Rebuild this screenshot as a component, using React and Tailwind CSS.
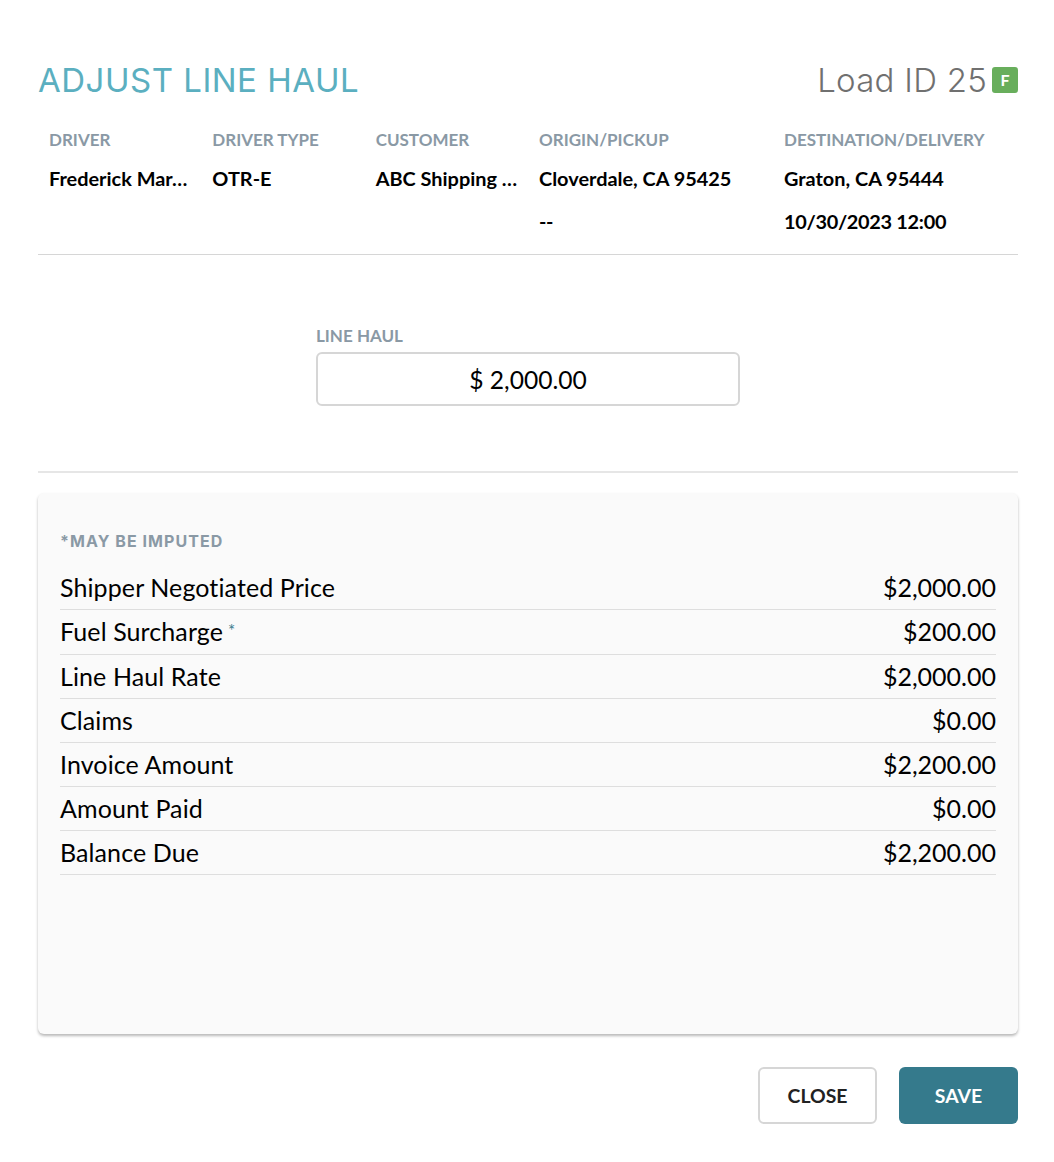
const info = [
  { label: "DRIVER", span: "col-span-2", lines: ["Frederick Mar…"] },
  { label: "DRIVER TYPE", span: "col-span-2", lines: ["OTR-E"] },
  { label: "CUSTOMER", span: "col-span-2", lines: ["ABC Shipping …"] },
  { label: "ORIGIN/PICKUP", span: "col-span-3", lines: ["Cloverdale, CA 95425", "--"] },
  { label: "DESTINATION/DELIVERY", span: "col-span-3", lines: ["Graton, CA 95444", "10/30/2023 12:00"] },
];

const rows = [
  ["Shipper Negotiated Price", "$2,000.00"],
  ["Fuel Surcharge", "$200.00", true],
  ["Line Haul Rate", "$2,000.00"],
  ["Claims", "$0.00"],
  ["Invoice Amount", "$2,200.00"],
  ["Amount Paid", "$0.00"],
  ["Balance Due", "$2,200.00"],
];

export default function App() {
  return (
    <div className="w-[1054px] h-[1162px] bg-white pl-[38px] pr-[36px] pt-[60px] font-['Lato','Liberation_Sans',sans-serif] text-black overflow-hidden [font-variant-ligatures:none]">
      <div className="flex items-center justify-between h-[40px]">
        <h1 className="font-['Inter',sans-serif] text-[33px] font-normal leading-[40px] text-[#5bafc0] tracking-[0.5px]">ADJUST LINE HAUL</h1>
        <div className="flex items-center">
          <span className="font-['Inter',sans-serif] text-[33px] font-light leading-[40px] text-[#707070] tracking-[0.25px]">Load ID 25</span>
          <span className="ml-[5px] w-[26px] h-[26px] rounded-[3px] bg-[#68ae5c] text-white text-[16px] font-bold flex items-center justify-center">F</span>
        </div>
      </div>

      <div className="grid grid-cols-12 mt-[30px] h-[125px] border-b border-[#d6d6d6]">
        {info.map((c) => (
          <div key={c.label} className={`${c.span} px-[11px] min-w-0`}>
            <div className="text-[17px] leading-[20px] font-bold text-[#8a99a5] h-[20px]">{c.label}</div>
            {c.lines.map((l, i) => (
              <div key={l} className={`text-[19.9px] leading-[22px] font-bold whitespace-nowrap ${i === 0 ? "mt-[17px]" : "mt-[21px] tracking-[-0.3px]"}`}>{l}</div>
            ))}
          </div>
        ))}
      </div>

      <div className="flex flex-col items-center h-[218px] border-b-2 border-[#e6e6e6] pt-[71px]">
        <div className="w-[424px]">
          <div className="text-[17px] leading-[20px] font-bold text-[#8a99a5] mb-[6px]">LINE HAUL</div>
          <div className="h-[54px] pt-[2px] border-2 border-[#d6d6d6] rounded-[6px] flex items-center justify-center text-[24.6px] leading-none">$ 2,000.00</div>
        </div>
      </div>

      <div className="mt-[20px] h-[541px] rounded-[6px] bg-[#fafafa] shadow-[0_2px_3px_rgba(0,0,0,0.28)] px-[22px] pt-[38px]">
        <div className="font-['Inter',sans-serif] text-[16px] leading-[20px] font-bold text-[#8a99a5] tracking-[1.05px]">*MAY BE IMPUTED</div>
        <div className="mt-[14px]">
          {rows.map(([k, v, star], i) => (
            <div key={k} className={`flex items-center justify-between border-b border-[#dedede] text-[25px] leading-[30px] ${i === 1 ? "h-[45px] pb-[2px]" : i === 0 ? "h-[44.5px]" : "h-[44px]"}`}>
              <span className="flex items-center tracking-[0.1px]">
                {k}
                {star && <span className="ml-[5px] text-[17px] leading-none text-[#3a7c8e]">*</span>}
              </span>
              <span>{v}</span>
            </div>
          ))}
        </div>
      </div>

      <div className="flex justify-end gap-[22px] mt-[33px]">
        <button className="w-[119px] h-[57px] border-2 border-[#d6d6d6] rounded-[6px] bg-white text-[19.4px] font-bold text-[#222222]">CLOSE</button>
        <button className="w-[119px] h-[57px] rounded-[6px] bg-[#357a8c] text-[19.4px] font-bold text-white">SAVE</button>
      </div>
    </div>
  );
}
